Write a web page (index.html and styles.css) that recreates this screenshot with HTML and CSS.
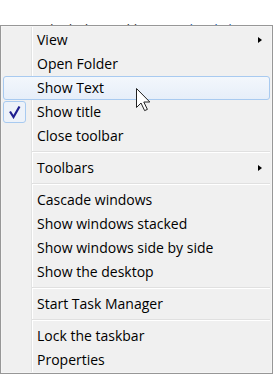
FILE: index.html
```html
<!DOCTYPE html>
<html lang="en">
<head>
    <meta charset="UTF-8">
    <meta name="viewport" content="width=device-width, initial-scale=1.0">
    <title>Taskbar context menu</title>
    <link rel="stylesheet" href="styles.css">
</head>
<body>
    <div class="page-text">
        <p>lock the tool bars. <span class="link">Right-click</span></p>
    </div>

    <div class="menu">
        <div class="item">View<span class="arrow"></span></div>
        <div class="item">Open Folder</div>
        <div class="item hover">Show Text</div>
        <div class="item">
            <span class="check">
                <svg width="12" height="14" viewBox="0 0 12 14">
                    <path d="M1 6.5 L4.5 12 L10.5 1.5" fill="none" stroke="#1f1f8f" stroke-width="2.2"/>
                </svg>
            </span>
            Show title
        </div>
        <div class="item">Close toolbar</div>
        <div class="separator"></div>
        <div class="item">Toolbars<span class="arrow"></span></div>
        <div class="separator"></div>
        <div class="item">Cascade windows</div>
        <div class="item">Show windows stacked</div>
        <div class="item">Show windows side by side</div>
        <div class="item">Show the desktop</div>
        <div class="separator"></div>
        <div class="item">Start Task Manager</div>
        <div class="separator"></div>
        <div class="item">Lock the taskbar</div>
        <div class="item">Properties</div>
    </div>

    <!-- mouse pointer over the hovered item -->
    <svg class="cursor" width="16" height="24" viewBox="0 0 16 24">
        <path d="M0.5 0.5 L0.5 19.5 L5 15 L8.6 22.6 L11.4 21.4 L7.8 14 L13.8 14 Z"
              fill="#fff" stroke="#222" stroke-width="1" stroke-linejoin="round"/>
    </svg>
</body>
</html>
```

FILE: styles.css
```css
body {
    margin: 0;
    background-color: #fff;
    font-family: "Open Sans", "Noto Sans", sans-serif;
    font-size: 14px;
    color: #000;
}
.page-text {
    padding-top: 20px;
    padding-left: 50px;
    white-space: nowrap;
}
.page-text p {
    margin: 0;
    line-height: 20px;
    color: #333;
}
.page-text .link {
    color: #1a5fb4;
}
.menu {
    position: relative;
    margin-top: -15px;
    width: 273px;
    box-sizing: border-box;
    border: 1px solid #979797;
    box-shadow: inset 0 0 0 1px #f5f5f5;
    padding: 2px 2px 1px 2px;
    background-color: #f0f0f0;
    background-image: linear-gradient(to right,
        transparent 30px, #e2e3e3 30px, #e2e3e3 31px,
        #fff 31px, #fff 32px, transparent 32px);
}
.item {
    position: relative;
    display: flex;
    align-items: center;
    height: 24px;
    padding-left: 34px;
    box-sizing: border-box;
    line-height: 24px;
    white-space: nowrap;
}
.item.hover {
    border: 1px solid #a8caf0;
    border-radius: 3px;
    padding-left: 33px;
    background: linear-gradient(to bottom, #f3f7fc, #e6eef9);
}
.arrow {
    margin-left: auto;
    margin-right: 8px;
    width: 0;
    height: 0;
    border-left: 4px solid #000;
    border-top: 3.5px solid transparent;
    border-bottom: 3.5px solid transparent;
}
.check {
    position: absolute;
    left: 0;
    top: 1px;
    width: 23px;
    height: 22px;
    box-sizing: border-box;
    border: 1px solid #a8caf0;
    border-radius: 3px;
    background-color: #edf2f9;
    display: flex;
    align-items: center;
    justify-content: center;
}
.separator {
    height: 8px;
    margin-left: 29px;
    display: flex;
    flex-direction: column;
    justify-content: center;
}
.separator::before {
    content: "";
    display: block;
    height: 1px;
    background-color: #e0e0e0;
    border-bottom: 1px solid #fff;
}
.cursor {
    position: absolute;
    left: 136px;
    top: 88px;
}
```
